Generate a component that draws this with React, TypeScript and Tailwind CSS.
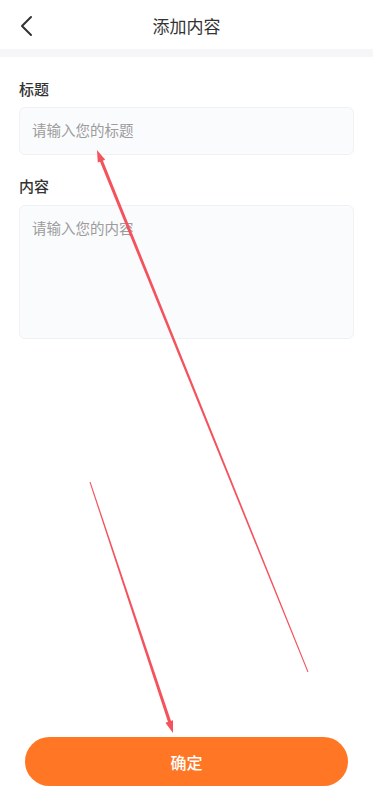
import React from "react";

function taper(x0: number, y0: number, x1: number, y1: number, w0: number, w1: number) {
  const dx = x1 - x0;
  const dy = y1 - y0;
  const len = Math.hypot(dx, dy);
  const nx = -dy / len;
  const ny = dx / len;
  const p = [
    [x0 + (nx * w0) / 2, y0 + (ny * w0) / 2],
    [x1 + (nx * w1) / 2, y1 + (ny * w1) / 2],
    [x1 - (nx * w1) / 2, y1 - (ny * w1) / 2],
    [x0 - (nx * w0) / 2, y0 - (ny * w0) / 2],
  ];
  return p.map((q) => q.join(",")).join(" ");
}

function head(x0: number, y0: number, x1: number, y1: number, l: number, hw: number) {
  const dx = x1 - x0;
  const dy = y1 - y0;
  const len = Math.hypot(dx, dy);
  const ux = dx / len;
  const uy = dy / len;
  const bx = x1 - ux * l;
  const by = y1 - uy * l;
  const nx = -uy;
  const ny = ux;
  return [
    [x1, y1],
    [bx + nx * hw, by + ny * hw],
    [bx - nx * hw, by - ny * hw],
  ]
    .map((q) => q.join(","))
    .join(" ");
}

export default function App() {
  return (
    <div
      className="relative flex min-h-[795px] flex-col bg-white text-[#333]"
      style={{ fontFamily: '"Noto Sans CJK SC", "Noto Sans", sans-serif' }}
    >
      <div className="relative flex h-[49px] items-center justify-center">
        <button className="absolute left-[14px] top-[14px] flex h-6 w-6 items-center justify-center">
          <svg width="14" height="22" viewBox="0 0 14 22" fill="none">
            <path d="M12 2 L3 11 L12 20" stroke="#333" strokeWidth="2" strokeLinecap="round" strokeLinejoin="round" />
          </svg>
        </button>
        <div className="mt-[2px] text-[17px] text-[#333]">添加内容</div>
      </div>
      <div className="h-2 bg-[#f6f6f8]" />

      <div className="flex flex-col px-[19px]">
        <div className="mt-[21px] text-[15px] font-medium leading-[22px] text-[#333]">标题</div>
        <div className="mt-[7px] flex h-[48px] items-center rounded-[6px] border border-[#f0f1f4] bg-[#fafbfd] px-[12px]">
          <span className="-mt-[2px] text-[14.5px] text-[#9c9c9c]">请输入您的标题</span>
        </div>
        <div className="mt-[20px] text-[15px] font-medium leading-[22px] text-[#333]">内容</div>
        <div className="mt-[8px] h-[134px] rounded-[6px] border border-[#f0f1f4] bg-[#fafbfd] px-[12px] pt-[9px]">
          <span className="text-[14.5px] text-[#9c9c9c]">请输入您的内容</span>
        </div>
      </div>

      <div className="flex-1" />

      <div className="px-[25px] pb-[9px]">
        <button className="flex h-[49px] w-full items-center justify-center rounded-full bg-[#ff7724] text-[16px] font-medium text-white">
          确定
        </button>
      </div>

      <svg className="pointer-events-none absolute left-0 top-0" width="373" height="795" viewBox="0 0 373 795">
        <polygon points={taper(308, 672, 101, 160, 1, 3.2)} fill="#f4525c" />
        <polygon points={head(308, 672, 97, 150, 12, 4)} fill="#f4525c" />
        <polygon points={taper(90, 482, 170, 723, 1, 3.2)} fill="#f4525c" />
        <polygon points={head(90, 482, 173, 733, 12, 4)} fill="#f4525c" />
      </svg>
    </div>
  );
}
